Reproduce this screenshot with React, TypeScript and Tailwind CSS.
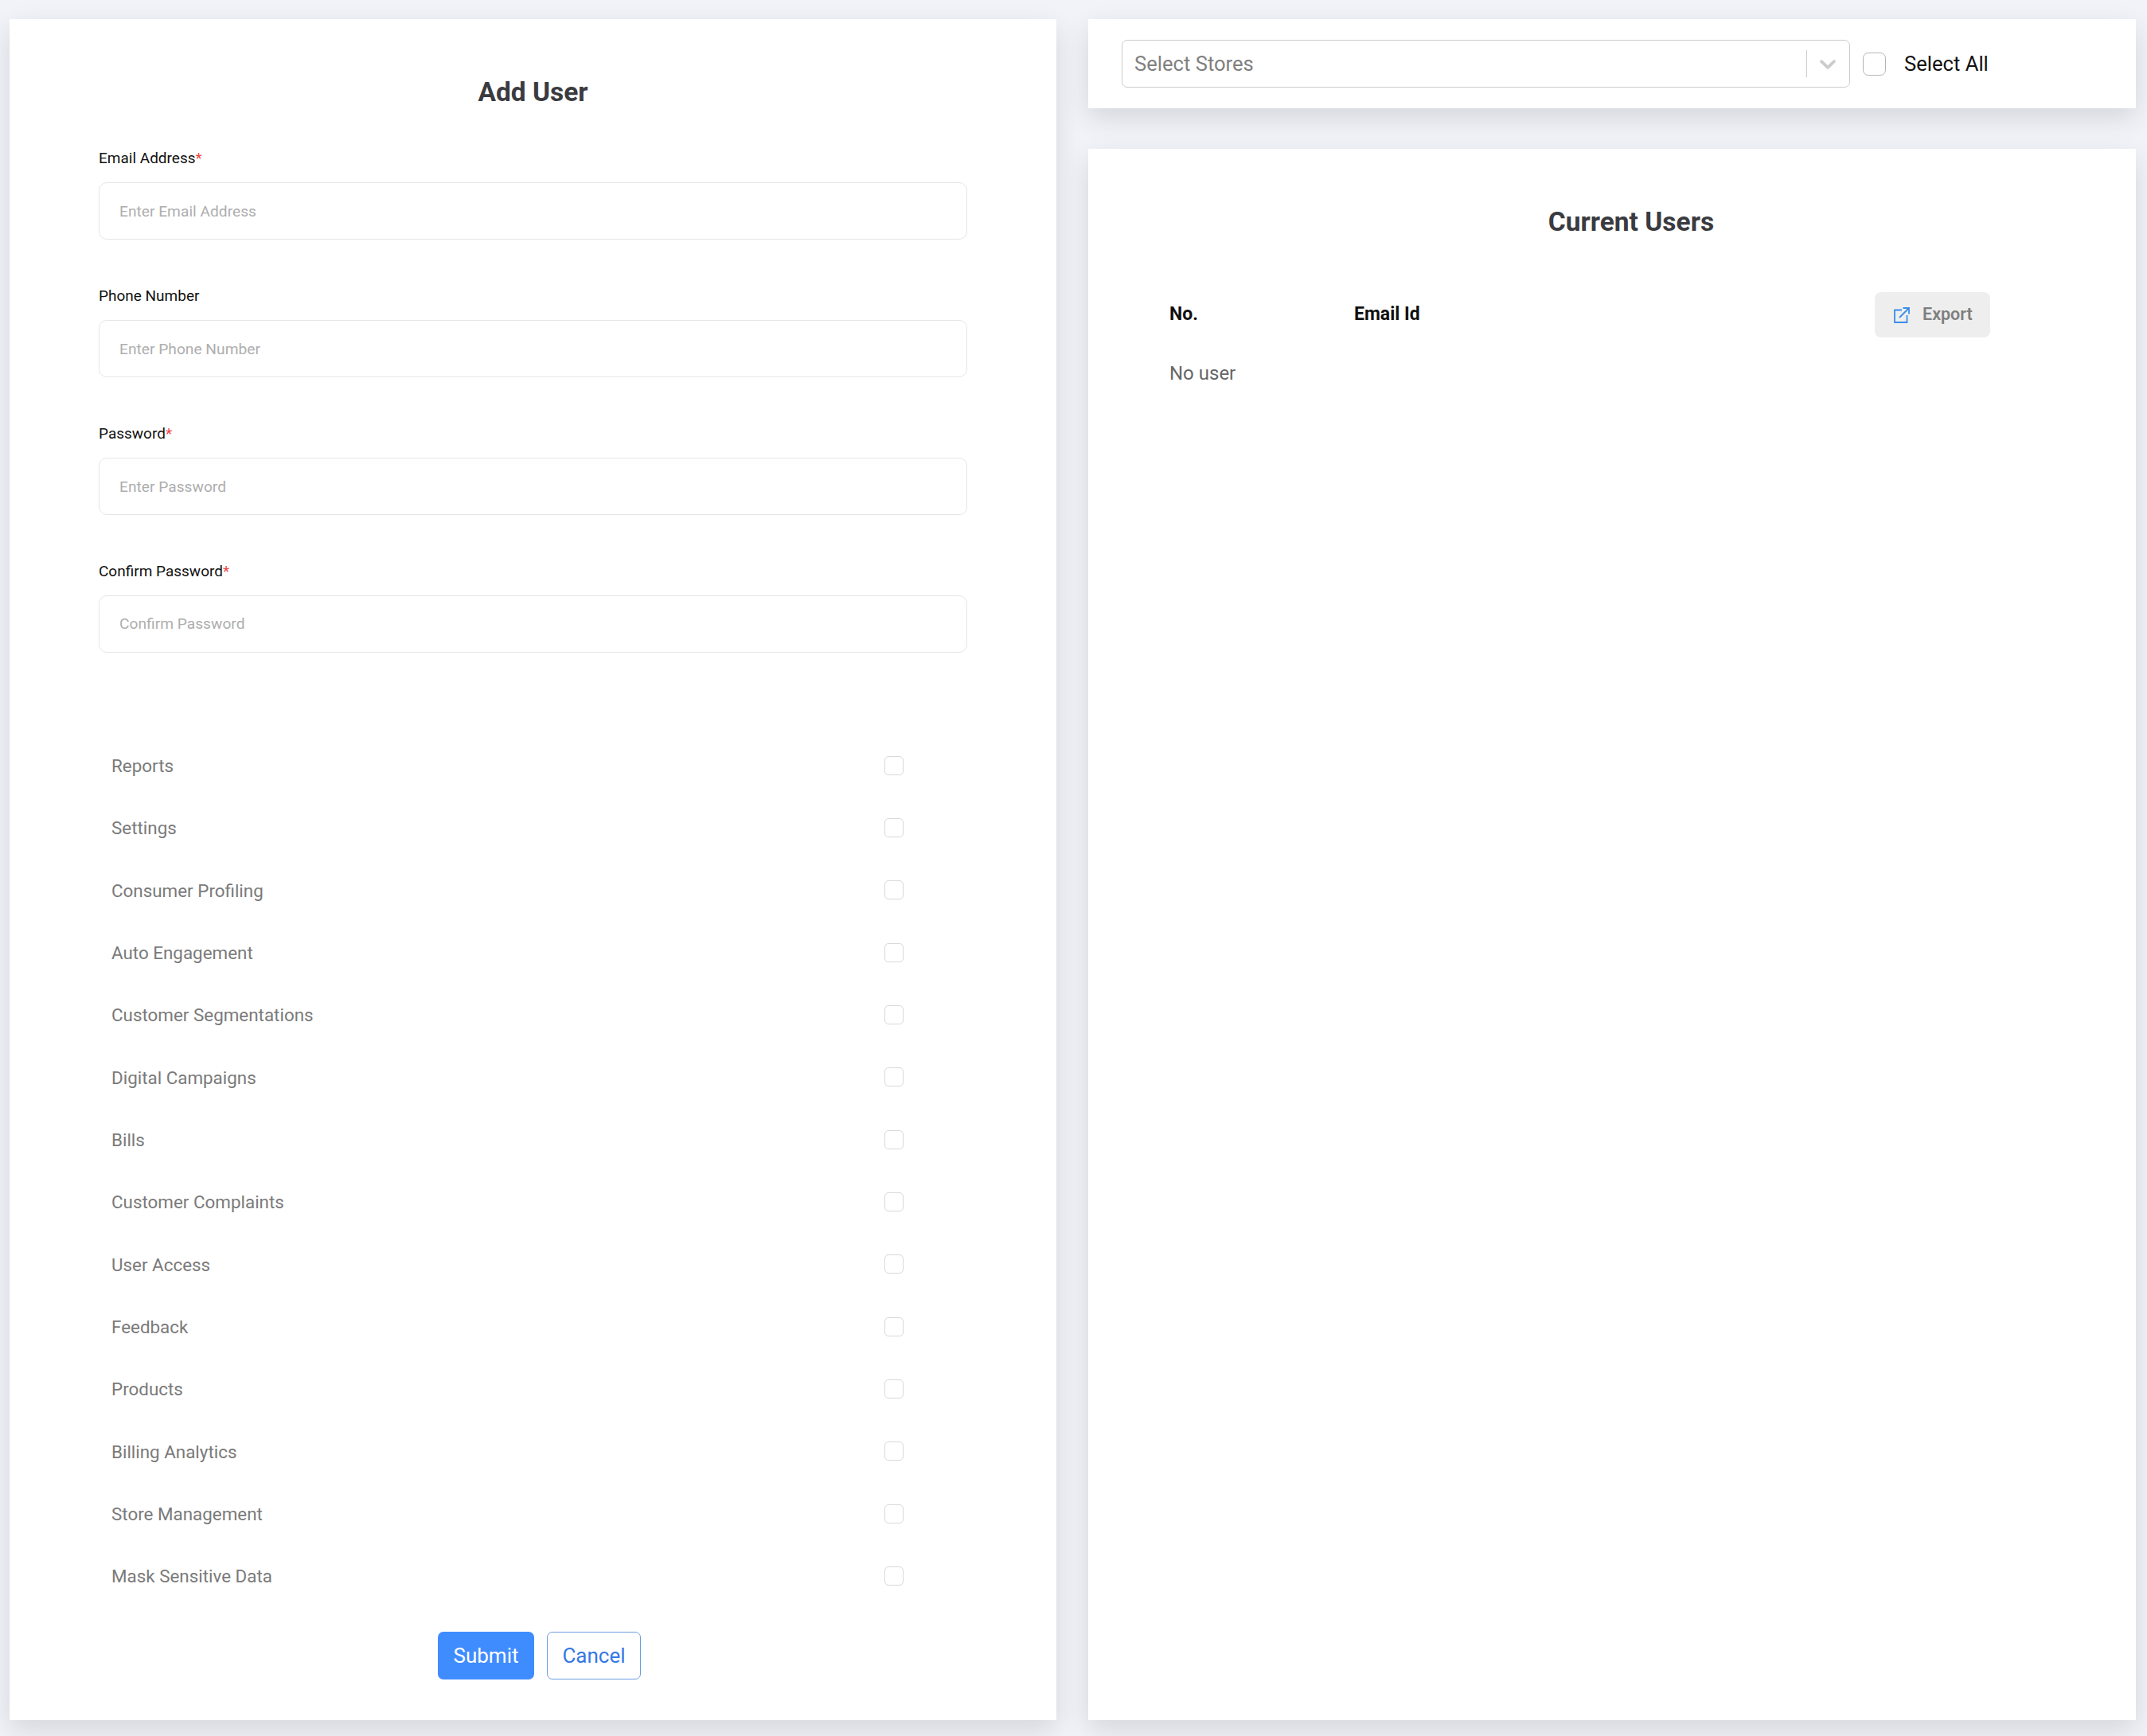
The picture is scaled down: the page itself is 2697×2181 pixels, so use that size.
import React from "react";

const perms = ["Reports","Settings","Consumer Profiling","Auto Engagement","Customer Segmentations","Digital Campaigns","Bills","Customer Complaints","User Access","Feedback","Products","Billing Analytics","Store Management","Mask Sensitive Data"];

function Field({ label, req, ph, mb }: { label: string; req?: boolean; ph: string; mb: string }) {
  return (
    <div className={mb}>
      <label className="block h-[30px] text-[19px] leading-[30px] text-[#111111] mb-[15px]">
        {label}{req && <span className="text-[#ef4444]">*</span>}
      </label>
      <input
        placeholder={ph}
        className="block w-full h-[72px] rounded-[10px] border-[1.5px] border-[#e6e6e6] px-[25px] text-[19.2px] bg-white placeholder:text-[#aeaeae] outline-none"
      />
    </div>
  );
}

export default function App() {
  return (
    <div className="w-[2697px] h-[2181px] bg-[#f1f3f9] flex gap-[40px] pl-[12px] pr-[14px] pt-[24px] pb-[20px] overflow-hidden font-['Roboto',sans-serif]">
      <div className="w-[1315px] bg-white shadow-[0_12px_32px_rgba(0,0,0,0.12)] flex flex-col">
        <h1 className="text-center text-[33.5px] font-bold text-[#3a3b40] leading-[40px] mt-[72px] mb-[48px]">Add User</h1>
        <div className="mx-[112px]">
          <Field label="Email Address" req ph="Enter Email Address" mb="mb-[56px]" />
          <Field label="Phone Number" ph="Enter Phone Number" mb="mb-[56px]" />
          <Field label="Password" req ph="Enter Password" mb="mb-[55.5px]" />
          <Field label="Confirm Password" req ph="Confirm Password" mb="mb-[104px]" />
          <div className="flex flex-col">
            {perms.map((p) => (
              <div key={p} className="h-[78.35px] flex items-center justify-between pl-[16px] pr-[80px]">
                <span className="text-[22.4px] text-[#7a7a7a]">{p}</span>
                <span className="w-[24px] h-[24px] -mt-[2px] rounded-[5px] border-[1.5px] border-[#d8d8d8] bg-white" />
              </div>
            ))}
          </div>
        </div>
        <div className="flex justify-center gap-[16px] mt-[30px] pl-[16px]">
          <button className="w-[121px] h-[60px] rounded-[7px] bg-[#3f8cff] text-white text-[26px]">Submit</button>
          <button className="w-[118px] h-[60px] rounded-[7px] border-[1.5px] border-[#6a9fe0] bg-white text-[#3578e5] text-[26px]">Cancel</button>
        </div>
      </div>
      <div className="w-[1316px] flex flex-col gap-[51px]">
        <div className="h-[112px] bg-white shadow-[0_12px_32px_rgba(0,0,0,0.12)] flex items-center pl-[42px]">
          <div className="w-[915px] h-[60px] rounded-[7px] border-[1.5px] border-[#cccccc] flex items-center pl-[15px] pr-[10px]">
            <span className="flex-1 text-[25.6px] text-[#808080]">Select Stores</span>
            <span className="w-[1.5px] h-[34px] bg-[#cccccc]" />
            <svg className="ml-[9px]" width="34" height="34" viewBox="0 0 20 20" fill="#cccccc"><path d="M4.516 7.548c.436-.446 1.043-.481 1.576 0L10 11.295l3.908-3.747c.533-.481 1.141-.446 1.574 0 .436.445.408 1.197 0 1.615-.406.418-4.695 4.502-4.695 4.502a1.095 1.095 0 0 1-1.576 0S4.924 9.581 4.516 9.163c-.409-.418-.436-1.17 0-1.615z"/></svg>
          </div>
          <span className="ml-[16px] w-[29px] h-[29px] rounded-[7px] border-[1.5px] border-[#b5b5b5] bg-white" />
          <span className="ml-[23px] text-[25.6px] text-[#111111]">Select All</span>
        </div>
        <div className="flex-1 bg-white shadow-[0_12px_32px_rgba(0,0,0,0.12)] flex flex-col">
          <h2 className="text-center text-[33.5px] font-bold text-[#3a3b40] leading-[40px] mt-[72px] pl-[48px]">Current Users</h2>
          <div className="ml-[102px] mr-[183px] mt-[68px]">
            <div className="h-[57px] flex items-center text-[23px] font-bold text-[#111111]">
              <span className="w-[232px]">No.</span>
              <span className="flex-1">Email Id</span>
              <button className="w-[145px] h-[57px] rounded-[8px] bg-[#eeeeee] flex items-center pl-[24px]">
                <svg width="20" height="20" viewBox="0 0 20 20" fill="none" stroke="#3b8ee8" strokeWidth="1.8">
                  <path d="M10 3.5H1v15.5h15.5V10" />
                  <path d="M7 13 19 1M11.5 1H19v7.5" />
                </svg>
                <span className="ml-[16px] text-[21.5px] font-semibold text-[#7f7f7f]">Export</span>
              </button>
            </div>
            <div className="mt-[30px] text-[24px] text-[#666666] leading-[30px]">No user</div>
          </div>
        </div>
      </div>
    </div>
  );
}
